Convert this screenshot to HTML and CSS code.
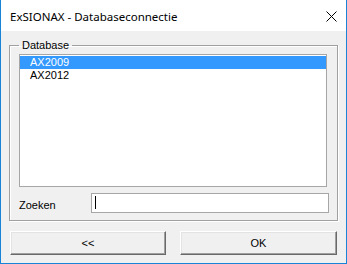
FILE: index.html
```html
<!DOCTYPE html>
<html lang="nl">
<head>
  <meta charset="UTF-8" />
  <title>ExSIONAX - Databaseconnectie</title>
  <link rel="stylesheet" href="styles.css">
</head>
<body>
  <div class="window">
    <div class="titlebar">
      <span class="title">ExSIONAX - Databaseconnectie</span>
      <svg class="close" width="11" height="11" viewBox="0 0 11 11">
        <path d="M0.5 0.5 L10.5 10.5 M10.5 0.5 L0.5 10.5" stroke="#000" stroke-width="1" fill="none"/>
      </svg>
    </div>

    <fieldset class="group">
      <legend>Database</legend>
      <div class="listbox">
        <div class="item selected">AX2009</div>
        <div class="item">AX2012</div>
      </div>
      <div class="search">
        <label for="zoeken">Zoeken</label>
        <div class="textbox" id="zoeken"><span class="caret"></span></div>
      </div>
    </fieldset>

    <div class="buttons">
      <button class="btn back">&lt;&lt;</button>
      <button class="btn ok">OK</button>
    </div>
  </div>
</body>
</html>
```

FILE: styles.css
```css
body {
  margin: 0;
  font-family: "Liberation Sans", Arial, sans-serif;
  font-size: 11px;
  color: #000;
  background: #f0f0f0;
}
.window {
  width: 347px;
  height: 264px;
  box-sizing: border-box;
  border: 1px solid #1883d7;
  border-top: none;
  background: #f0f0f0;
}
.titlebar {
  height: 31px;
  background: #fff;
  display: flex;
  align-items: center;
  justify-content: space-between;
  padding: 0 9px 0 9px;
}
.title {
  font-family: "Noto Sans", "Open Sans", sans-serif;
  font-size: 11.5px;
  padding-top: 2px;
}
.close {
  display: block;
  margin-top: 1px;
}
.group {
  margin: 8px 0 0 8px;
  width: 327px;
  height: 182px;
  box-sizing: border-box;
  padding: 2px 8px 7px 9px;
  border: 1px solid #a0a0a0;
  box-shadow: inset 1px 1px 0 #fff, 1px 1px 0 #fff;
}
.group legend {
  padding: 0 3px;
  line-height: 13px;
}
.listbox {
  width: 308px;
  height: 133px;
  box-sizing: border-box;
  background: #fff;
  border: 1px solid #a6a6a6;
  padding: 1px 0;
}
.item {
  height: 13px;
  line-height: 13px;
  padding-left: 10px;
}
.item.selected {
  background: #3399ff;
  color: #fff;
}
.search {
  display: flex;
  align-items: center;
  margin-top: 6px;
}
.search label {
  width: 72px;
  padding-top: 4px;
}
.textbox {
  width: 238px;
  height: 20px;
  box-sizing: border-box;
  background: #fff;
  border: 1px solid #a6a6a6;
  padding: 2px 0 0 3px;
}
.caret {
  display: block;
  width: 1px;
  height: 13px;
  background: #000;
}
.buttons {
  display: flex;
  gap: 14px;
  margin: 10px 0 0 9px;
}
.btn {
  height: 24px;
  background: #f0f0f0;
  border: 1px solid;
  border-color: #fff #696969 #696969 #fff;
  box-shadow: inset -1px -1px 0 #a0a0a0, inset 1px 1px 0 #e3e3e3;
  font-family: "Liberation Sans", Arial, sans-serif;
  font-size: 11px;
  color: #000;
  padding: 0;
}
.back {
  width: 156px;
}
.ok {
  width: 157px;
}
```
